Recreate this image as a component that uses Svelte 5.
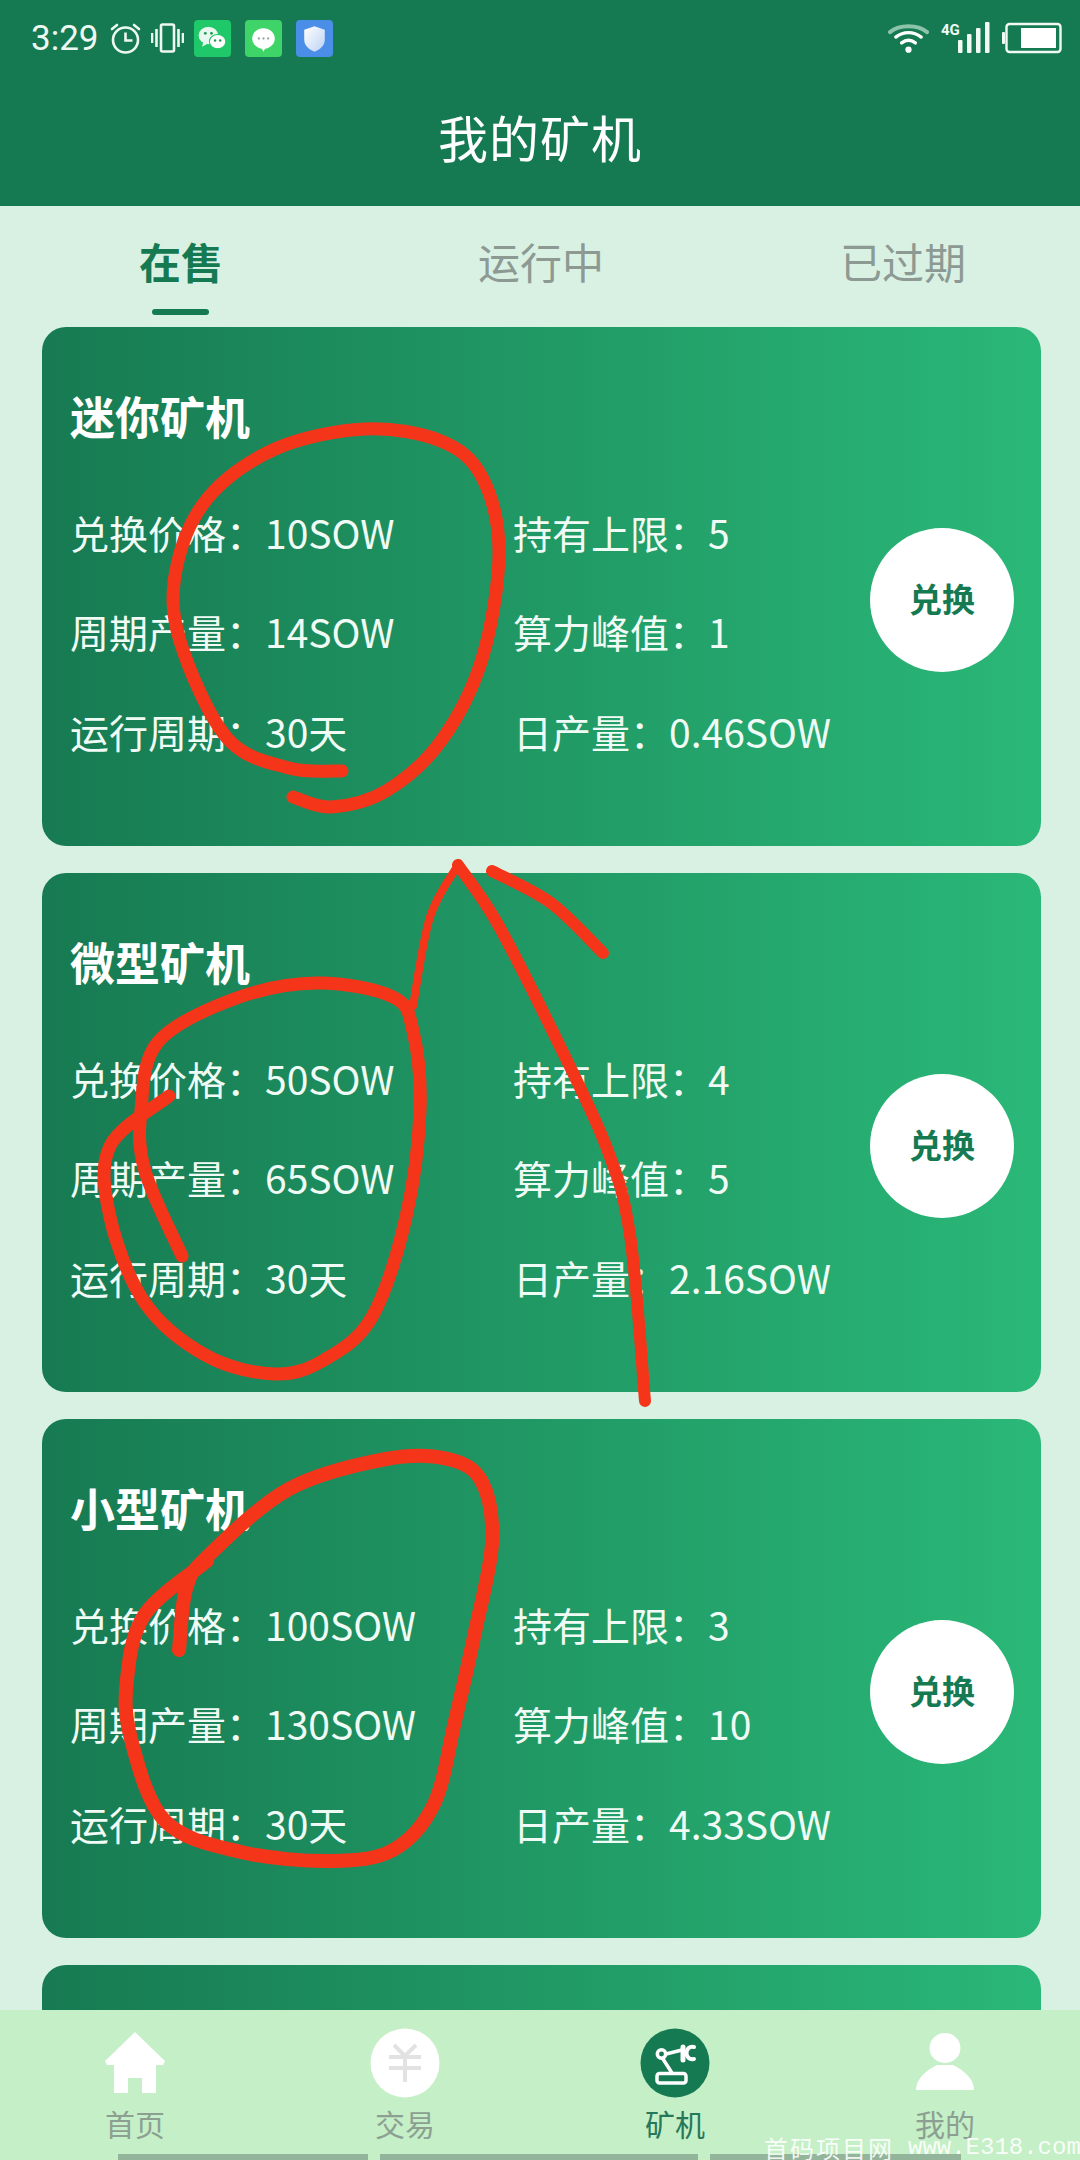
<script lang="ts">
  const tabs = [
    { label: '在售', active: true },
    { label: '运行中', active: false },
    { label: '已过期', active: false }
  ];

  const miners = [
    { name: '迷你矿机', price: '10SOW', limit: '5', output: '14SOW', power: '1', daily: '0.46SOW' },
    { name: '微型矿机', price: '50SOW', limit: '4', output: '65SOW', power: '5', daily: '2.16SOW' },
    { name: '小型矿机', price: '100SOW', limit: '3', output: '130SOW', power: '10', daily: '4.33SOW' }
  ];

  // hand-drawn annotation strokes, page coordinates
  const strokes = [
    { w: 13, pts: [[342,771],[289,768],[227,738],[180,641],[176,570],[207,499],[275,449],[365,429],[441,441],[482,477],[499,552],[482,659],[441,741],[386,791],[331,807],[293,797]] },
    { w: 13, pts: [[182,1256],[145,1171],[141,1110],[158,1042],[234,999],[317,983],[393,997],[413,1031],[420,1110],[406,1217],[372,1317],[324,1360],[275,1374],[207,1356],[145,1303],[110,1217],[110,1146],[169,1096]] },
    { w: 8, pts: [[413,1006],[430,917],[458,865]] },
    { w: 12, pts: [[458,865],[496,921],[551,1028],[606,1146],[630,1235],[645,1401]] },
    { w: 12, pts: [[492,871],[551,903],[603,953]] },
    { w: 14, pts: [[179,1650],[186,1589],[207,1557],[289,1489],[386,1459],[448,1459],[482,1482],[492,1543],[475,1632],[455,1721],[434,1804],[393,1850],[331,1861],[241,1852],[165,1821],[131,1739],[127,1679],[145,1614],[207,1561]] }
  ];

  function smooth(pts: number[][]) {
    let d = `M${pts[0][0]} ${pts[0][1]}`;
    for (let i = 0; i < pts.length - 1; i++) {
      const p0 = pts[Math.max(i - 1, 0)];
      const p1 = pts[i];
      const p2 = pts[i + 1];
      const p3 = pts[Math.min(i + 2, pts.length - 1)];
      const c1x = p1[0] + (p2[0] - p0[0]) / 6;
      const c1y = p1[1] + (p2[1] - p0[1]) / 6;
      const c2x = p2[0] - (p3[0] - p1[0]) / 6;
      const c2y = p2[1] - (p3[1] - p1[1]) / 6;
      d += ` C${c1x} ${c1y} ${c2x} ${c2y} ${p2[0]} ${p2[1]}`;
    }
    return d;
  }
</script>

<div class="page">
  <header class="top">
    <div class="status">
      <span class="time">3:29</span>
      <svg class="alarm" width="31" height="32" viewBox="0 0 31 32" fill="none" stroke="#eef8f2" stroke-width="2.6">
        <circle cx="15.500" cy="18" r="12.500" />
        <path d="M15.500 10.500v8h7" />
        <path d="M2 7l5-4M29 7l-5-4" stroke-linecap="round" />
      </svg>
      <svg class="vibrate" width="33" height="32" viewBox="0 0 33 32" fill="none" stroke="#eef8f2" stroke-width="2.6">
        <rect x="10" y="2.500" width="13" height="27" rx="1.500" />
        <path d="M5.500 7v18M1 11v10M27.500 7v18M32 11v10" />
      </svg>
      <span class="tile wechat">
        <svg width="37" height="37" viewBox="0 0 36 36">
          <ellipse cx="14" cy="15" rx="9.500" ry="8.500" fill="#e9f8ef" />
          <path d="M9 21l-1 5 5-3z" fill="#e9f8ef" />
          <ellipse cx="23" cy="21" rx="8" ry="7" fill="#fff" stroke="#1fc868" stroke-width="1" />
          <circle cx="11" cy="13" r="1.400" fill="#1b9a55" />
          <circle cx="17" cy="13" r="1.400" fill="#1b9a55" />
          <circle cx="20.500" cy="20" r="1.200" fill="#1b9a55" />
          <circle cx="25.500" cy="20" r="1.200" fill="#1b9a55" />
        </svg>
      </span>
      <span class="tile message">
        <svg width="37" height="37" viewBox="0 0 36 36">
          <path d="M18 8c6 0 11 4.400 11 10 0 5.600-5 9.500-9.500 10l-1.500 3-1.500-3C12 27.500 7 23.600 7 18 7 12.400 12 8 18 8z" fill="#fff" />
          <circle cx="13.500" cy="18" r="1.100" fill="#9aa79f" />
          <circle cx="18" cy="18" r="1.100" fill="#9aa79f" />
          <circle cx="22.500" cy="18" r="1.100" fill="#9aa79f" />
        </svg>
      </span>
      <span class="tile shield">
        <svg width="37" height="37" viewBox="0 0 36 36">
          <defs>
            <linearGradient id="sh" x1="0" y1="0" x2="1" y2="1">
              <stop offset="0" stop-color="#ffffff" />
              <stop offset="1" stop-color="#bcd2f5" />
            </linearGradient>
          </defs>
          <path d="M18 6l10 3.500V19c0 6-4.500 9.500-10 12-5.500-2.500-10-6-10-12V9.500z" fill="url(#sh)" />
        </svg>
      </span>
      <span class="spacer"></span>
      <svg class="wifi" width="41" height="32" viewBox="0 0 42 32" fill="none" stroke-linecap="round">
        <path d="M2 10C12 2 30 2 40 10" stroke="#8cc4aa" stroke-width="4" />
        <path d="M8 15c8-6 18-6 26 0" stroke="#fff" stroke-width="3.500" />
        <path d="M14 21c4.500-3.500 9.500-3.500 14 0" stroke="#fff" stroke-width="3.500" />
        <circle cx="21" cy="28" r="3.200" fill="#fff" />
      </svg>
      <span class="signal">
        <span class="net">4G</span>
        <svg width="32" height="32" viewBox="0 0 32 32" fill="#f2faf6">
          <rect x="0" y="18" width="4.500" height="13" rx="1" />
          <rect x="9" y="12" width="4.500" height="19" rx="1" />
          <rect x="18" y="6" width="4.500" height="25" rx="1" />
          <rect x="27" y="0" width="4.500" height="31" rx="1" />
        </svg>
      </span>
      <svg class="battery" width="60" height="32" viewBox="0 0 60 32">
        <rect x="0" y="10" width="3" height="12" rx="1" fill="#f2faf6" />
        <rect x="4.500" y="2" width="54" height="28" rx="3" fill="none" stroke="#f2faf6" stroke-width="2.400" />
        <rect x="19" y="6" width="35" height="20" fill="#fff" />
      </svg>
    </div>
    <h1>我的矿机</h1>
  </header>

  <main class="main">
    <nav class="tabs">
      {#each tabs as t}
        <div class="tab" class:active={t.active}>
          <span>{t.label}</span>
          {#if t.active}<i class="line"></i>{/if}
        </div>
      {/each}
    </nav>

    <div class="list">
      {#each miners as m}
        <section class="card">
          <h2>{m.name}</h2>
          <div class="grid">
            <span>兑换价格：{m.price}</span><span>持有上限：{m.limit}</span>
            <span>周期产量：{m.output}</span><span>算力峰值：{m.power}</span>
            <span>运行周期：30天</span><span>日产量：{m.daily}</span>
          </div>
          <button class="swap">兑换</button>
        </section>
      {/each}
      <section class="card"></section>
    </div>
  </main>

  <footer class="foot">
    <div class="items">
      <div class="item">
        <svg width="70" height="70" viewBox="0 0 70 70" fill="#fff">
          <path d="M35 4L65 33 63 37H56V65H42V50H28V65H14V37H7L5 33z" />
        </svg>
        <span>首页</span>
      </div>
      <div class="item">
        <svg width="70" height="70" viewBox="0 0 70 70">
          <circle cx="35" cy="35" r="34.500" fill="#fff" />
          <path d="M24 17l11 11 11-11M19 29h32M19 40h32M35 28v26" fill="none" stroke="#e2e2e2" stroke-width="4" />
        </svg>
        <span>交易</span>
      </div>
      <div class="item current">
        <svg width="70" height="70" viewBox="0 0 70 70" fill="none" stroke="#fff" stroke-width="3.500" stroke-linecap="round" stroke-linejoin="round">
          <circle cx="35" cy="35" r="34.500" fill="#157a52" stroke="none" />
          <rect x="17" y="45.500" width="29" height="9.500" rx="2.500" />
          <circle cx="21.500" cy="26" r="4.200" />
          <path d="M26 26l16-4M23 31l9 14" />
          <path d="M43 19v13" stroke-width="5" />
          <path d="M54 19c-5-1-7.500 2.500-7.500 6s2.500 7 7.500 6" stroke-width="4" />
        </svg>
        <span>矿机</span>
      </div>
      <div class="item">
        <svg width="70" height="70" viewBox="0 0 70 70" fill="#fff">
          <ellipse cx="35" cy="20" rx="15.500" ry="15" />
          <path d="M6 62C6 50 17 42 27 37L43 37C53 42 64 50 64 62z" />
        </svg>
        <span>我的</span>
      </div>
    </div>
    <div class="bars"><i class="b1"></i><i class="b2"></i><i class="b3"></i></div>
  </footer>

  <svg class="ink" width="1080" height="2160" viewBox="0 0 1080 2160" fill="none" stroke="#f5351a" stroke-linecap="round" stroke-linejoin="round">
    {#each strokes as s}
      <path d={smooth(s.pts)} stroke-width={s.w} />
    {/each}
  </svg>

  <div class="mark"><span class="zh">首码项目网</span> <span class="en">www.E318.com</span></div>
</div>

<style>
  :global(body) { margin: 0; }
  .page {
    position: relative;
    width: 1080px;
    height: 2160px;
    display: flex;
    flex-direction: column;
    overflow: hidden;
    background: #d9f1e3;
    font-family: "Noto Sans CJK SC", "Noto Sans", sans-serif;
  }
  .top { background: #157a52; height: 206px; color: #fff; flex: none; }
  .status { display: flex; align-items: center; height: 76px; padding: 0 18px 0 31px; }
  .time { font-family: Roboto, sans-serif; font-size: 35px; color: #eef8f2; width: 79px; }
  .alarm { margin-right: 10px; }
  .vibrate { margin-right: 10px; }
  .tile { width: 37px; height: 37px; border-radius: 4px; margin-right: 14px; display: block; }
  .tile svg { display: block; }
  .wechat { background: #1fc868; }
  .message { background: #3fd468; }
  .shield { background: #4a8ee8; }
  .spacer { flex: 1; }
  .wifi { margin-right: 12px; }
  .signal { display: flex; position: relative; width: 49px; justify-content: flex-end; margin-right: 12px; }
  .net { position: absolute; left: 0; top: 0; font: 700 15px/16px Roboto, sans-serif; color: #f2faf6; }
  h1 { margin: 0; font-size: 50px; font-weight: 400; line-height: 120px; text-align: center; letter-spacing: 1px; }

  .main { flex: 1; min-height: 0; overflow: hidden; }
  .tabs { display: grid; grid-template-columns: 358px 362px 362px; height: 121px; padding-left: 2px; }
  .tab { position: relative; text-align: center; font-size: 42px; line-height: 56px; padding-top: 27px; color: #8c9a93; }
  .tab.active { color: #157a52; font-weight: 700; }
  .line { position: absolute; left: 150px; top: 103px; width: 57px; height: 6px; border-radius: 3px; background: #157a52; }

  .list { display: flex; flex-direction: column; gap: 27px; padding: 0 39px 0 42px; }
  .card {
    position: relative;
    flex: none;
    height: 519px;
    box-sizing: border-box;
    padding: 64px 28px 0;
    border-radius: 24px;
    background: linear-gradient(90deg, #177a52, #2ab878);
    color: #fff;
  }
  h2 { margin: 0 0 41px; font-size: 45px; line-height: 50px; font-weight: 700; }
  .grid {
    display: grid;
    grid-template-columns: 443px 1fr;
    grid-auto-rows: 99.5px;
    align-items: center;
    font-size: 39px;
    color: #f0fbf5;
  }
  .swap {
    position: absolute;
    right: 27px;
    top: 201px;
    width: 144px;
    height: 144px;
    padding: 0 0 4px;
    border: none;
    border-radius: 50%;
    background: #fff;
    color: #157a52;
    font: 700 33px "Noto Sans CJK SC", sans-serif;
  }

  .foot { flex: none; height: 150px; background: #c5efc6; display: flex; flex-direction: column; }
  .items { flex: 1; display: grid; grid-template-columns: repeat(4, 270px); padding-top: 18px; }
  .item { display: flex; flex-direction: column; align-items: center; color: #8c9f92; font-size: 30px; line-height: 40px; }
  .item svg { display: block; margin-bottom: 5px; }
  .item.current { color: #25795a; }
  .bars { height: 6px; display: flex; gap: 12px; padding-left: 118px; }
  .bars i { display: block; background: #93b59c; }
  .b1 { width: 250px; }
  .b2 { width: 318px; }
  .b3 { width: 251px; }

  .ink { position: absolute; left: 0; top: 0; pointer-events: none; }
  .mark {
    position: absolute;
    left: 764px;
    top: 2135px;
    display: flex;
    gap: 14px;
    line-height: 26px;
    color: rgba(255, 255, 255, 0.9);
    white-space: nowrap;
  }
  .zh { font-size: 24px; letter-spacing: 2px; }
  .en { font: 24px/26px "Liberation Mono", monospace; }
</style>
